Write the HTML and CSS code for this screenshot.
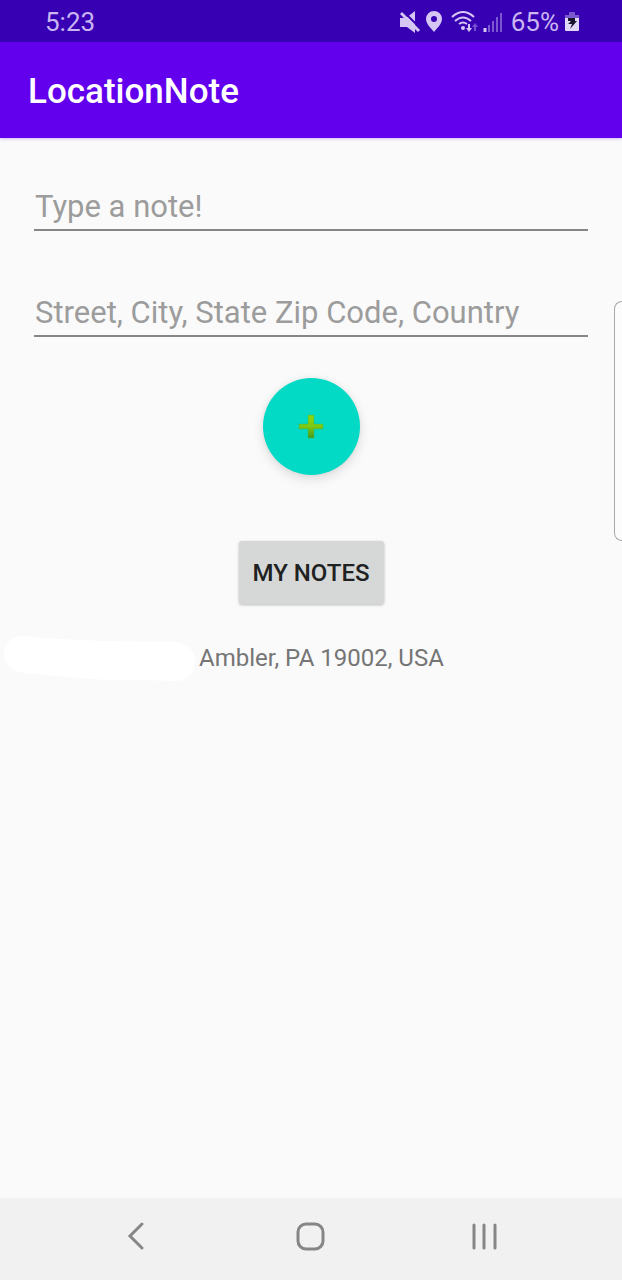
FILE: index.html
```html
<!DOCTYPE html>
<html lang="en">
<head>
<meta charset="utf-8">
<meta name="viewport" content="width=device-width, initial-scale=1">
<title>LocationNote</title>
<link rel="stylesheet" href="styles.css">
</head>
<body>
<div class="screen">
  <div class="status-bar">
    <time class="clock">5:23</time>
    <div class="status-icons">
      <svg class="icon-mute" width="22" height="22" viewBox="0 0 22 22" aria-hidden="true">
        <path d="M1 7h6l9-7v22l-8-6H1z" fill="#d5c6f4"/>
        <path d="M4 0 22 18" stroke="#3800b3" stroke-width="2"/>
        <path d="M2 2 20 20" stroke="#d5c6f4" stroke-width="3"/>
      </svg>
      <svg class="icon-pin" width="18" height="22" viewBox="0 0 18 22" aria-hidden="true">
        <path fill="#d5c6f4" fill-rule="evenodd" d="M9 0a8 8 0 0 0-8 8c0 5 5 9 8 13 3-4 8-8 8-13a8 8 0 0 0-8-8zm0 5a3 3 0 1 1 0 6 3 3 0 0 1 0-6z"/>
      </svg>
      <svg class="icon-wifi" width="28" height="22" viewBox="0 0 28 22" aria-hidden="true">
        <g fill="none" stroke="#d5c6f4" stroke-width="2">
          <path d="M1 6Q12-4 23 6"/>
          <path d="M4 10q8-7 16 0"/>
          <path d="M8 13q4-3 8 0"/>
          <path d="M18 13v6"/>
        </g>
        <circle cx="12" cy="17" r="2" fill="#d5c6f4"/>
        <path d="M15 17h6l-3 4z" fill="#d5c6f4"/>
        <path d="M24 12l3 4h-2v4h-2v-4h-2z" fill="#7650cf"/>
      </svg>
      <svg class="icon-signal" width="20" height="20" viewBox="0 0 20 20" aria-hidden="true">
        <path d="M2 16v4" stroke="#d5c6f4" stroke-width="3"/>
        <path d="M6 13v7M10 9v11M14 5v15M18 1v19" stroke="#7c58d0" stroke-width="2"/>
      </svg>
      <span class="percent">65%</span>
      <svg class="icon-battery" width="14" height="20" viewBox="0 0 14 20" aria-hidden="true">
        <path d="M4 0h6v3h4v4H0V3h4z" fill="#7c58d0"/>
        <path d="M0 6h14v12a1 1 0 0 1-1 1H1a1 1 0 0 1-1-1z" fill="#e2d8f8"/>
        <path d="M3 6h7v3h2l-7 8 2-5H3l3-3H3z" fill="#17132a"/>
      </svg>
    </div>
  </div>
  <header class="app-bar"><h1 class="title">LocationNote</h1></header>
  <main class="content">
    <form class="form">
      <input class="field" type="text" aria-label="Note" placeholder="Type a note!">
      <input class="field" type="text" aria-label="Address" placeholder="Street, City, State Zip Code, Country">
      <button class="fab" type="button" aria-label="Add note">
        <svg width="26" height="26" viewBox="0 0 26 26" aria-hidden="true">
          <defs><linearGradient id="leaf" x1="0" y1="0" x2="0" y2="1"><stop offset="0" stop-color="#8ed80f"/><stop offset=".5" stop-color="#7cc815"/><stop offset="1" stop-color="#479b1c"/></linearGradient></defs>
          <path d="M10 1h6v9h9v5h-9v9h-6v-9H1v-5h9z" fill="url(#leaf)" stroke="#35b84f" stroke-opacity=".5"/>
        </svg>
      </button>
      <button class="notes-button" type="button">MY NOTES</button>
    </form>
    <div class="address">
      <svg class="redaction" width="192" height="48" viewBox="0 0 192 48" aria-hidden="true">
        <path fill="#fff" d="M20 2C8 2 0 9 0 20c0 10 8 18 20 19l65 6c30 2 60 1 87 2 12 0 19-8 19-20 0-11-8-18-22-19-50-1-90 0-149-6z"/>
      </svg>
      <p class="place">Ambler, PA 19002, USA</p>
    </div>
    <div class="edge-handle"></div>
  </main>
  <nav class="nav-bar" aria-label="System">
    <button class="nav-button" type="button" aria-label="Back">
      <svg width="32" height="32" viewBox="0 0 32 32" aria-hidden="true"><path d="M21 4 9 16l12 12"/></svg>
    </button>
    <button class="nav-button" type="button" aria-label="Home">
      <svg width="32" height="32" viewBox="0 0 32 32" aria-hidden="true"><rect x="3" y="4" width="25" height="25" rx="8"/></svg>
    </button>
    <button class="nav-button" type="button" aria-label="Recent apps">
      <svg width="32" height="32" viewBox="0 0 32 32" aria-hidden="true"><path d="M5 5v23M15 5v23M26 5v23"/></svg>
    </button>
  </nav>
</div>
</body>
</html>
```
FILE: styles.css
```css
* { box-sizing: border-box; }
body { margin: 0; font-family: Roboto, "Noto Sans", sans-serif; background: #fafafa; }
button { border: 0; padding: 0; font-family: inherit; cursor: pointer; }
svg { display: block; flex: none; }

.screen { min-height: 100vh; display: flex; flex-direction: column; }

.status-bar {
  display: flex;
  justify-content: space-between;
  align-items: center;
  height: 42px;
  padding: 2px 43px 0 45px;
  background: #3800b3;
  color: #c9b6f2;
  font-size: 26px;
  line-height: 32px;
}
.status-icons { display: flex; align-items: center; gap: 8px; }
.icon-mute { margin-right: -4px; }
.icon-wifi { margin-right: -4px; }
.percent { margin-right: -2px; }

.app-bar {
  display: flex;
  align-items: center;
  height: 96px;
  padding: 4px 28px 0;
  background: #6200ee;
  box-shadow: 0 1px 3px rgba(98, 0, 238, 0.25);
}
.title { margin: 0; color: #fff; font-size: 35px; line-height: 40px; font-weight: 500; }

.content { position: relative; flex: 1; padding-top: 44px; }
.form { display: flex; flex-direction: column; align-items: center; padding: 0 34px; }
.field {
  width: 100%;
  height: 49px;
  margin-bottom: 57px;
  padding: 2px 1px 0;
  border: 0;
  border-bottom: 2px solid #868686;
  border-radius: 0;
  outline: 0;
  background: transparent;
  color: #212121;
  font-family: inherit;
  font-size: 31px;
}
.field::placeholder { color: #9c9c9c; opacity: 1; }
.field + .fab { margin-top: -16px; }
.fab {
  display: flex;
  align-items: center;
  justify-content: center;
  width: 97px;
  height: 97px;
  border-radius: 50%;
  background: #03dac5;
  box-shadow: 0 4px 12px rgba(0, 0, 0, 0.12), 0 0 4px rgba(0, 0, 0, 0.06);
}
.notes-button {
  margin-top: 66px;
  padding: 0 14px;
  height: 63px;
  border-radius: 3px;
  background: #d6d7d7;
  box-shadow: 0 1px 3px rgba(0, 0, 0, 0.26);
  color: #202121;
  font-size: 24px;
  font-weight: 500;
}

.address { display: flex; align-items: center; gap: 3px; margin-top: 30px; padding-left: 4px; }
.place { margin: 0; color: #757575; font-size: 24px; line-height: 28px; }

.edge-handle {
  position: absolute;
  top: 163px;
  right: 0;
  width: 8px;
  height: 240px;
  border: 1px solid #a9a9a9;
  border-right: 0;
  border-radius: 8px 0 0 8px;
  background: #fcfcfc;
}

.nav-bar { display: flex; justify-content: center; gap: 10px; height: 82px; padding: 0 55px; background: #f1f1f1; }
.nav-button {
  display: flex;
  flex: 1;
  align-items: center;
  justify-content: center;
  padding-bottom: 6px;
  background: transparent;
}
.nav-button path, .nav-button rect {
  fill: none;
  stroke: #868686;
  stroke-width: 3;
  stroke-linecap: round;
}
```
